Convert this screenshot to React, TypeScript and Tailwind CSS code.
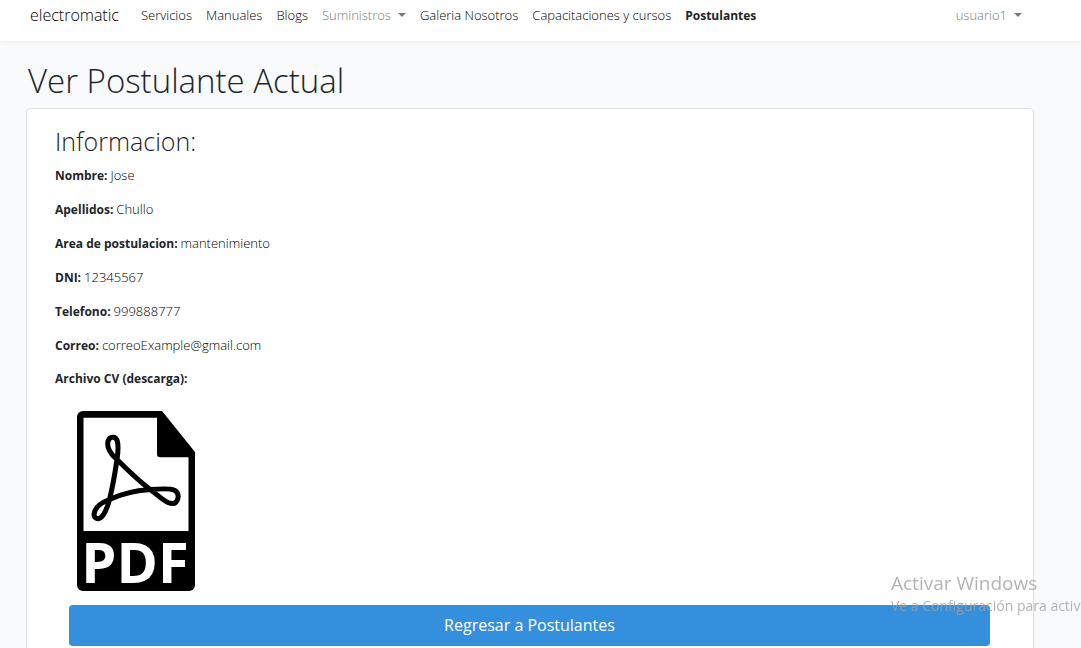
import React from "react";

const navLinks = [
  { label: "Servicios" },
  { label: "Manuales" },
  { label: "Blogs" },
  { label: "Suministros", menu: true },
  { label: "Galeria Nosotros" },
  { label: "Capacitaciones y cursos" },
  { label: "Postulantes", active: true },
];

const fields = [
  { label: "Nombre:", value: "Jose" },
  { label: "Apellidos:", value: "Chullo" },
  { label: "Area de postulacion:", value: "mantenimiento" },
  { label: "DNI:", value: "12345567" },
  { label: "Telefono:", value: "999888777" },
  { label: "Correo:", value: "correoExample@gmail.com" },
  { label: "Archivo CV (descarga):", value: "" },
];

function Caret() {
  return (
    <svg className="h-1 w-2" viewBox="0 0 8 4" fill="currentColor" aria-hidden="true">
      <path d="M0 0h8L4 4z" />
    </svg>
  );
}

function MenuButton({ label }: { label: string }) {
  return (
    <button type="button" className="flex items-center gap-[7px] text-[#7a7a7a]">
      {label}
      <Caret />
    </button>
  );
}

function PdfIcon() {
  return (
    <svg className="h-[180px] w-[118px]" viewBox="0 0 118 180" role="img" aria-label="PDF">
      <path d="M6 0h79l33 41v133a6 6 0 0 1-6 6H6a6 6 0 0 1-6-6V6a6 6 0 0 1 6-6z" fill="#000" />
      <path d="M6.500 6.700H80v36.600a3 3 0 0 0 3 3h28.500V120h-105z" fill="#fff" />
      <path
        d="M40 48.500C34 44 29.500 36 31 30.500c1.500-5.500 8-5.500 9.300-.5C41.500 35 41 42 40 48.500 38 62 36 75 32.500 88.500 30.500 96 28 103 24 106.500c-3.500 2.500-7.500.5-6.800-4C18 96.500 24.500 91.500 32.500 88.500 46 82 60 79.500 73 78.500c9-.7 20-1.200 24.500.7 4.300 2.300 4.300 7.300 2.500 10.500-2 3.500-5.500 3.300-9 1.800-6-2.800-11.500-8.500-18-13C61 69 50 58.500 40 48.500z"
        fill="none"
        stroke="#000"
        strokeWidth="5"
        strokeLinejoin="round"
      />
      <text x="58" y="172" textAnchor="middle" fontSize="56" fill="#fff" className="font-['Open_Sans',sans-serif] font-bold">
        PDF
      </text>
    </svg>
  );
}

export default function App() {
  return (
    <div className="min-h-screen overflow-hidden bg-[#f8fafc] font-['Open_Sans',sans-serif] text-[13px] leading-5 font-light text-[#212529]">
      <header className="bg-white shadow-[0_2px_4px_rgba(0,0,0,0.04)]">
        <nav className="flex h-[41px] items-start pt-[5px] pr-[59px] pl-[30px] whitespace-nowrap">
          <a href="#" className="mr-[22px] text-[16px] text-black">
            electromatic
          </a>
          <ul className="flex gap-[14px]">
            {navLinks.map((item) => (
              <li key={item.label}>
                {item.menu ? (
                  <MenuButton label={item.label} />
                ) : (
                  <a href="#" className={item.active ? "text-[12px] font-bold text-[#212529]" : "text-black"}>
                    {item.label}
                  </a>
                )}
              </li>
            ))}
          </ul>
          <div className="ml-auto">
            <MenuButton label="usuario1" />
          </div>
        </nav>
      </header>

      <main className="pt-5 pr-[47px] pl-[26px]">
        <h1 className="mb-[7px] pl-0.5 text-[33px] leading-10">Ver Postulante Actual</h1>
        <section className="rounded-[4px] border border-[#dfdfdf] bg-white px-7 pt-4 pb-6">
          <h2 className="mb-2 text-[25px] leading-8">Informacion:</h2>
          <dl className="flex flex-col gap-[14px]">
            {fields.map((field) => (
              <div key={field.label} className="flex h-5 items-baseline gap-[3px]">
                <dt className="text-[12px] leading-5 font-bold">{field.label}</dt>
                <dd className="text-black">{field.value}</dd>
              </div>
            ))}
          </dl>
          <a href="#" className="mt-[22px] ml-[22px] block w-[118px]">
            <PdfIcon />
          </a>
          <a
            href="#"
            className="mt-[14px] mr-[15px] ml-[14px] block rounded-[4px] bg-[#3490dc] py-[10px] text-center text-[16px] leading-[21px] font-normal text-white"
          >
            Regresar a Postulantes
          </a>
        </section>
      </main>

      <aside className="pointer-events-none fixed top-[570px] left-[891px] whitespace-nowrap text-[#a0a0a0]/80">
        <p className="text-[19px] leading-[26px] font-normal">Activar Windows</p>
        <p className="text-[14px] leading-5 font-normal">Ve a Configuración para activar Windows.</p>
      </aside>
    </div>
  );
}
